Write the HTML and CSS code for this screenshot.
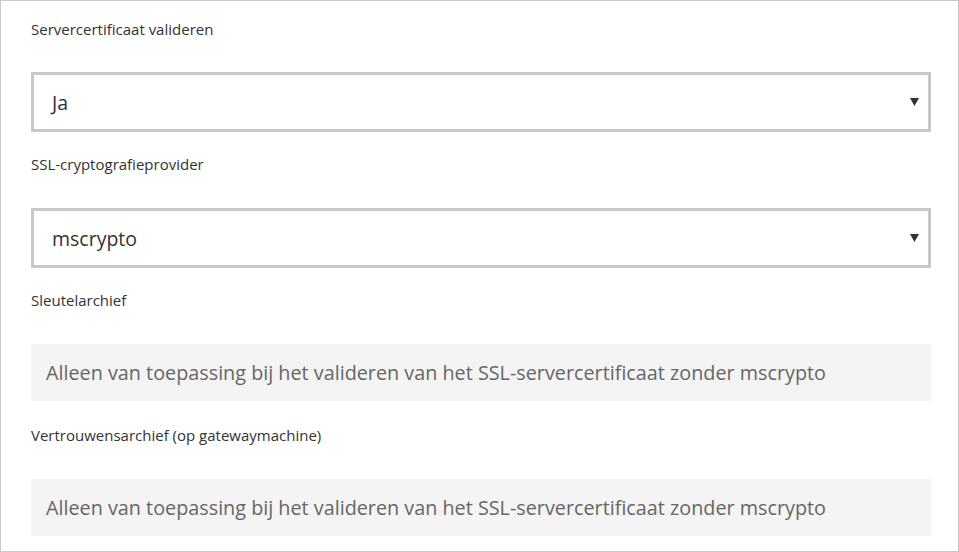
FILE: index.html
```html
<!DOCTYPE html>
<html lang="nl">
<head>
<meta charset="utf-8">
<title>Instellingen</title>
<link rel="stylesheet" href="styles.css">
</head>
<body>
<div class="panel">
  <div class="label first">Servercertificaat valideren</div>
  <div class="select">
    <span class="value">Ja</span>
    <svg class="arrow" width="9" height="8" viewBox="0 0 9 8"><polygon points="0,0 9,0 4.5,8" fill="#333"/></svg>
  </div>
  <div class="label">SSL-cryptografieprovider</div>
  <div class="select">
    <span class="value">mscrypto</span>
    <svg class="arrow" width="9" height="8" viewBox="0 0 9 8"><polygon points="0,0 9,0 4.5,8" fill="#333"/></svg>
  </div>
  <div class="label">Sleutelarchief</div>
  <div class="input">Alleen van toepassing bij het valideren van het SSL-servercertificaat zonder mscrypto</div>
  <div class="label last">Vertrouwensarchief (op gatewaymachine)</div>
  <div class="input">Alleen van toepassing bij het valideren van het SSL-servercertificaat zonder mscrypto</div>
</div>
</body>
</html>
```
FILE: styles.css
```css
html, body {
  margin: 0;
  padding: 0;
  background: #fff;
}
.panel {
  box-sizing: border-box;
  width: 959px;
  height: 552px;
  border: 1px solid #c8c8c8;
  padding: 18px 27px 0 30px;
  font-family: "Open Sans", "Noto Sans", sans-serif;
  display: flex;
  flex-direction: column;
}
.label {
  font-size: 15px;
  line-height: 20px;
  height: 20px;
  color: #333;
  margin-top: 22px;
  margin-bottom: 34px;
}
.label.first {
  margin-top: 0;
  margin-bottom: 33px;
}
.label.last {
  margin-top: 24px;
  margin-bottom: 34px;
}
.select {
  box-sizing: border-box;
  height: 60px;
  border: 3px solid #c8c8c8;
  display: flex;
  align-items: center;
  justify-content: space-between;
  padding: 0 9px 0 18px;
}
.value {
  font-size: 19.5px;
  color: #333;
}
.arrow {
  display: block;
}
.input {
  box-sizing: border-box;
  height: 57px;
  background: #f4f4f4;
  display: flex;
  align-items: center;
  padding: 0 15px;
  font-size: 19.8px;
  color: #666;
}
```
